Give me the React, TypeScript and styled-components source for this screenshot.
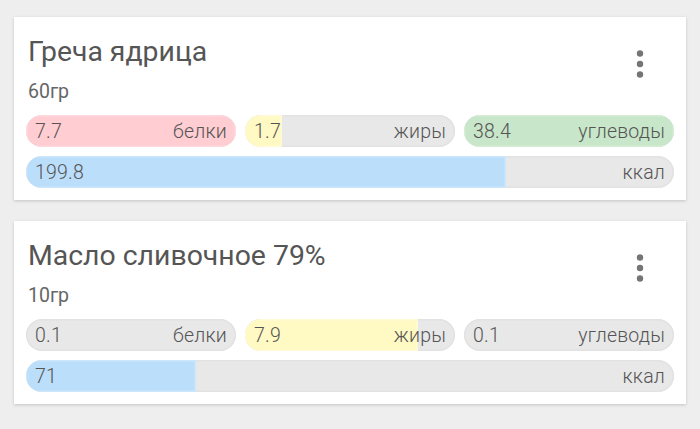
import React from 'react';
import styled, { createGlobalStyle } from 'styled-components';

const GlobalStyle = createGlobalStyle`
  html, body {
    margin: 0;
    padding: 0;
    background: #eeeeee;
    font-family: Roboto, "Noto Sans", sans-serif;
  }
`;

const Page = styled.div`
  display: flex;
  flex-direction: column;
  gap: 21px;
  padding: 17px 14px;
`;

const Card = styled.div`
  background: #fff;
  box-shadow: 0 1px 3px rgba(0, 0, 0, 0.18);
  padding: 18px 12px 12px;
`;

const Header = styled.div`
  display: flex;
  justify-content: space-between;
  align-items: flex-start;
  padding-left: 2px;
`;

const Title = styled.h2`
  margin: 0;
  font-size: 28.4px;
  line-height: 34px;
  font-weight: 400;
  color: #555;
`;

const Weight = styled.div`
  margin-top: 12px;
  font-size: 19.5px;
  line-height: 22px;
  font-weight: 400;
  color: #666;
`;

const MenuButton = styled.button`
  border: none;
  background: none;
  padding: 0;
  margin: 14px 30px 0 0;
  display: flex;
  cursor: pointer;
`;

const Bars = styled.div`
  display: grid;
  grid-template-columns: repeat(3, 1fr);
  gap: 9px;
  margin-top: 12px;
`;

const Track = styled.div<{ $wide?: boolean }>`
  position: relative;
  grid-column: ${(p) => (p.$wide ? '1 / -1' : 'auto')};
  height: 32px;
  border-radius: 16px;
  background: #e8e8e8;
  box-shadow: inset 0 0 0 1.5px #e2e2e2;
  overflow: hidden;
`;

const Fill = styled.div<{ $color: string }>`
  position: absolute;
  left: 0;
  top: 0;
  bottom: 0;
  background: ${(p) => p.$color};
  box-shadow: inset 0 0 0 1.5px rgba(255, 255, 255, 0.25);
`;

const Label = styled.div`
  position: relative;
  display: flex;
  justify-content: space-between;
  align-items: center;
  height: 100%;
  padding: 0 9px 0 9px;
  font-size: 19.5px;
  letter-spacing: 0.2px;
  font-weight: 300;
  color: #555;
`;

const colors = {
  protein: '#ffcdd2',
  fat: '#fff9c4',
  carbs: '#c8e6c9',
  kcal: '#bbdefb',
};

const maxes = { protein: 7, fat: 9.6, carbs: 36, kcal: 270 };

type Food = {
  name: string;
  weight: string;
  protein: number;
  fat: number;
  carbs: number;
  kcal: number;
};

const foods: Food[] = [
  { name: 'Греча ядрица', weight: '60гр', protein: 7.7, fat: 1.7, carbs: 38.4, kcal: 199.8 },
  { name: 'Масло сливочное 79%', weight: '10гр', protein: 0.1, fat: 7.9, carbs: 0.1, kcal: 71 },
];

const pct = (v: number, max: number) => {
  const p = (v / max) * 100;
  return p < 2 ? 0 : Math.min(100, p);
};

const Bar: React.FC<{ value: number; max: number; color: string; label: string; wide?: boolean }> = ({
  value,
  max,
  color,
  label,
  wide,
}) => (
  <Track $wide={wide}>
    <Fill $color={color} style={{ width: `${pct(value, max)}%` }} />
    <Label>
      <span>{value}</span>
      <span>{label}</span>
    </Label>
  </Track>
);

const MoreIcon = () => (
  <svg width="8" height="30" viewBox="0 0 8 30">
    <circle cx="4" cy="4.5" r="3.2" fill="#757575" />
    <circle cx="4" cy="15" r="3.2" fill="#757575" />
    <circle cx="4" cy="25.5" r="3.2" fill="#757575" />
  </svg>
);

const FoodCard: React.FC<{ food: Food }> = ({ food }) => (
  <Card>
    <Header>
      <div>
        <Title>{food.name}</Title>
        <Weight>{food.weight}</Weight>
      </div>
      <MenuButton>
        <MoreIcon />
      </MenuButton>
    </Header>
    <Bars>
      <Bar value={food.protein} max={maxes.protein} color={colors.protein} label="белки" />
      <Bar value={food.fat} max={maxes.fat} color={colors.fat} label="жиры" />
      <Bar value={food.carbs} max={maxes.carbs} color={colors.carbs} label="углеводы" />
      <Bar value={food.kcal} max={maxes.kcal} color={colors.kcal} label="ккал" wide />
    </Bars>
  </Card>
);

const App: React.FC = () => (
  <>
    <GlobalStyle />
    <Page>
      {foods.map((f) => (
        <FoodCard key={f.name} food={f} />
      ))}
    </Page>
  </>
);

export default App;
